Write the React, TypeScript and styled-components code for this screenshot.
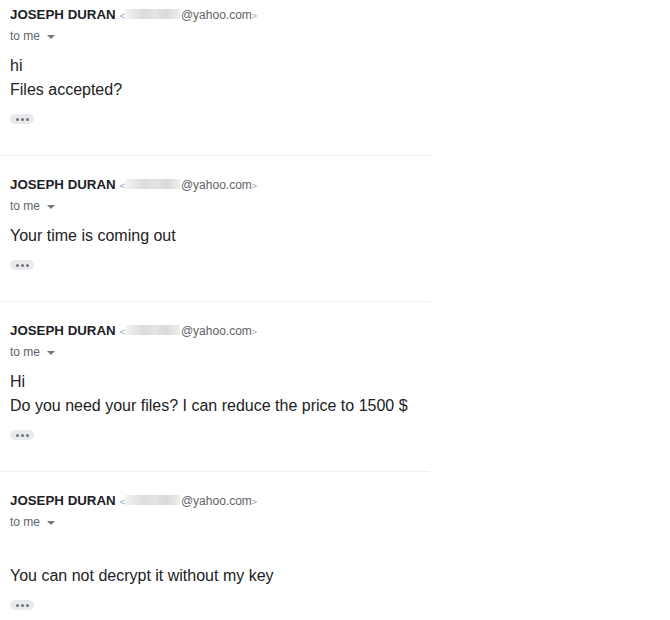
import React from "react";
import styled, { createGlobalStyle } from "styled-components";

const GlobalStyle = createGlobalStyle`
  body {
    margin: 0;
    background: #ffffff;
    font-family: "Liberation Sans", Arial, sans-serif;
  }
`;

const Thread = styled.div`
  width: 670px;
  display: flex;
  flex-direction: column;
`;

const Message = styled.div<{ $first?: boolean }>`
  width: 430px;
  box-sizing: border-box;
  padding: ${(p) => (p.$first ? "5px" : "19px")} 10px 31px;
  border-bottom: 1px solid #efefef;
  &:last-child {
    border-bottom: none;
  }
`;

const SenderRow = styled.div`
  display: flex;
  align-items: baseline;
  white-space: nowrap;
  line-height: 20px;
`;

const SenderName = styled.span`
  font-size: 13.3px;
  font-weight: 700;
  color: #202124;
  margin-right: 4px;
`;

const SenderEmail = styled.span`
  display: inline-flex;
  align-items: baseline;
  font-size: 12px;
  color: #5f6368;
`;

const Bracket = styled.span`
  font-size: 9px;
  color: #9aa0a6;
`;

const Redacted = styled.span`
  display: inline-block;
  width: 55px;
  height: 10px;
  margin: 0 1px 0 0;
  background: linear-gradient(
    to right,
    #f4f4f4 0%,
    #e9e9e9 15%,
    #dcdcdc 35%,
    #e4e4e4 55%,
    #d9d9d9 75%,
    #efefef 100%
  );
  filter: blur(0.6px);
`;

const Recipient = styled.div`
  display: flex;
  align-items: center;
  gap: 5px;
  font-size: 12px;
  line-height: 20px;
  color: #5f6368;
`;

const Caret = styled.span`
  width: 0;
  height: 0;
  border-left: 4px solid transparent;
  border-right: 4px solid transparent;
  border-top: 4px solid #777;
  margin-left: 2px;
  margin-top: 1px;
`;

const Body = styled.div`
  margin-top: 8px;
  font-size: 16px;
  line-height: 24px;
  color: #222222;
`;

const Line = styled.div`
  min-height: 24px;
`;

const MoreButton = styled.div`
  margin-top: 12px;
  width: 24px;
  height: 10px;
  border-radius: 5px;
  background: #e8eaed;
  display: flex;
  align-items: center;
  justify-content: center;
  gap: 2px;
`;

const Dot = styled.span`
  width: 3px;
  height: 3px;
  border-radius: 50%;
  background: #6f7377;
`;

interface MailProps {
  lines: string[];
  first?: boolean;
}

const Mail = ({ lines, first }: MailProps) => (
  <Message $first={first}>
    <SenderRow>
      <SenderName>JOSEPH DURAN</SenderName>
      <SenderEmail>
        <Bracket>&lt;</Bracket>
        <Redacted />
        @yahoo.com<Bracket>&gt;</Bracket>
      </SenderEmail>
    </SenderRow>
    <Recipient>
      to me <Caret />
    </Recipient>
    <Body>
      {lines.map((l, i) => (
        <Line key={i}>{l}</Line>
      ))}
    </Body>
    <MoreButton>
      <Dot />
      <Dot />
      <Dot />
    </MoreButton>
  </Message>
);

export default function App() {
  return (
    <>
      <GlobalStyle />
      <Thread>
        <Mail first lines={["hi", "Files accepted?"]} />
        <Mail lines={["Your time is coming out"]} />
        <Mail lines={["Hi", "Do you need your files? I can reduce the price to 1500 $"]} />
        <Mail lines={["", "You can not decrypt it without my key"]} />
      </Thread>
    </>
  );
}
